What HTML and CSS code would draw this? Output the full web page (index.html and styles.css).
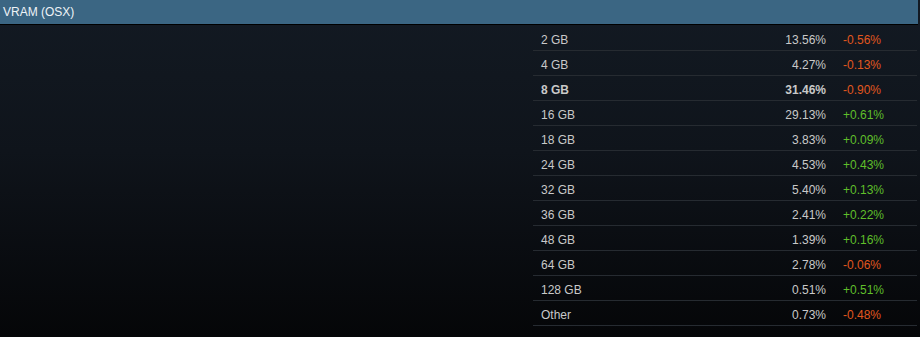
FILE: index.html
```html
<!DOCTYPE html>
<html lang="en">

<head>
  <meta charset="utf-8">
  <title>VRAM (OSX)</title>
  <link rel="stylesheet" href="styles.css">
</head>

<body>
  <div class="stats-section">
    <div class="stats-header">VRAM (OSX)</div>
    <div class="stats-body">
      <div class="stats-chart"></div>
      <div class="stats-table">
        <div class="stats-row"><span class="row-label">2 GB</span><span class="row-pct">13.56%</span><span class="row-change down">-0.56%</span></div>
        <div class="stats-row"><span class="row-label">4 GB</span><span class="row-pct">4.27%</span><span class="row-change down">-0.13%</span></div>
        <div class="stats-row top"><span class="row-label">8 GB</span><span class="row-pct">31.46%</span><span class="row-change down">-0.90%</span></div>
        <div class="stats-row"><span class="row-label">16 GB</span><span class="row-pct">29.13%</span><span class="row-change up">+0.61%</span></div>
        <div class="stats-row"><span class="row-label">18 GB</span><span class="row-pct">3.83%</span><span class="row-change up">+0.09%</span></div>
        <div class="stats-row"><span class="row-label">24 GB</span><span class="row-pct">4.53%</span><span class="row-change up">+0.43%</span></div>
        <div class="stats-row"><span class="row-label">32 GB</span><span class="row-pct">5.40%</span><span class="row-change up">+0.13%</span></div>
        <div class="stats-row"><span class="row-label">36 GB</span><span class="row-pct">2.41%</span><span class="row-change up">+0.22%</span></div>
        <div class="stats-row"><span class="row-label">48 GB</span><span class="row-pct">1.39%</span><span class="row-change up">+0.16%</span></div>
        <div class="stats-row"><span class="row-label">64 GB</span><span class="row-pct">2.78%</span><span class="row-change down">-0.06%</span></div>
        <div class="stats-row"><span class="row-label">128 GB</span><span class="row-pct">0.51%</span><span class="row-change up">+0.51%</span></div>
        <div class="stats-row"><span class="row-label">Other</span><span class="row-pct">0.73%</span><span class="row-change down">-0.48%</span></div>
      </div>
    </div>
  </div>
</body>

</html>
```

FILE: styles.css
```css
html,
body {
  margin: 0;
  padding: 0;
  height: 100%;
}

body {
  background: linear-gradient(to bottom, #131a23 0%, #0f141b 45%, #050608 100%);
  font-family: "Liberation Sans", Arial, sans-serif;
  font-size: 12px;
  color: #c9c9c9;
}

.stats-section {
  width: 918px;
}

.stats-header {
  height: 24px;
  line-height: 25px;
  padding-left: 3px;
  background-color: #3b6683;
  border-bottom: 1px solid #000;
  color: #eef3f7;
  font-size: 12px;
}

.stats-body {
  display: flex;
}

.stats-chart {
  width: 533px;
  flex-shrink: 0;
}

.stats-table {
  flex: 1;
  margin-top: 1px;
  margin-right: 1px;
}

.stats-row {
  display: flex;
  height: 20px;
  line-height: 21px;
  padding-top: 4px;
  border-bottom: 1px solid #262b31;
  padding-left: 8px;
}

.stats-row.top {
  font-weight: bold;
}

.row-label {
  flex: 1;
}

.row-pct {
  width: 80px;
  text-align: right;
}

.row-change {
  width: 74px;
  padding-left: 17px;
}

.row-change.down {
  color: #e0571f;
  font-weight: normal;
}

.row-change.up {
  color: #5fbf2a;
  font-weight: normal;
}
```
